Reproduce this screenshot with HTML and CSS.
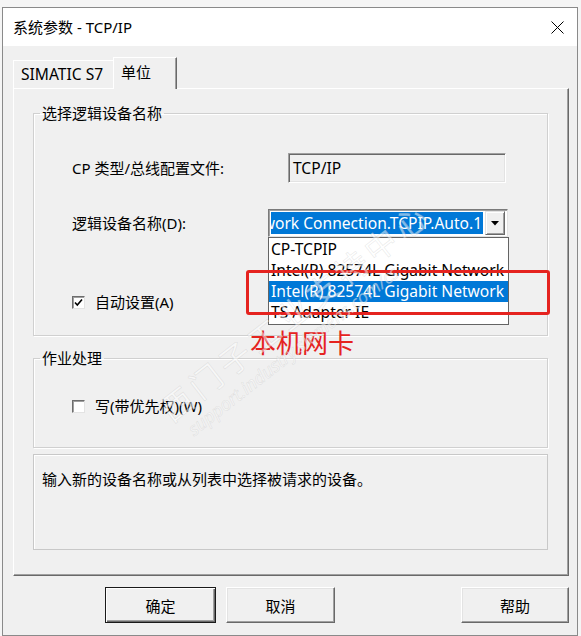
FILE: index.html
```html
<!DOCTYPE html>
<html lang="zh-CN">
<head>
<meta charset="utf-8">
<title>系统参数 - TCP/IP</title>
<link rel="stylesheet" href="styles.css">
</head>
<body>
<div class="window">
  <div class="titlebar">
    <span class="title">系统参数 - TCP/IP</span>
    <svg class="close" width="13" height="13" viewBox="0 0 13 13"><path d="M0.5 0.5 L12.5 12.5 M12.5 0.5 L0.5 12.5" stroke="#000" stroke-width="1" fill="none"/></svg>
  </div>
  <div class="client">
    <div class="tabs">
      <div class="tab latin">SIMATIC S7</div>
      <div class="tab active">单位</div>
    </div>
    <div class="panel">
      <fieldset class="group g1">
        <legend>选择逻辑设备名称</legend>
        <div class="gbody g1body">
          <div class="row r1">
            <span class="lbl lbl1">CP 类型/总线配置文件:</span>
            <div class="textbox latin">TCP/IP</div>
          </div>
          <div class="row r2">
            <span class="lbl lbl2">逻辑设备名称(D):</span>
            <div class="combo-wrap">
              <div class="combo">
                <div class="cval latin"><span class="sel">work Connection.TCPIP.Auto.1</span></div>
                <div class="cbtn"><svg width="8" height="5" viewBox="0 0 8 5"><path d="M0 0 H8 L4 4.5 Z" fill="#000"/></svg></div>
              </div>
              <ul class="dlist latin">
                <li>CP-TCPIP</li>
                <li>Intel(R) 82574L Gigabit Network</li>
                <li class="hl">Intel(R) 82574L Gigabit Network</li>
                <li>TS Adapter IE</li>
              </ul>
              <div class="redbox"></div>
              <div class="note">本机网卡</div>
            </div>
          </div>
          <div class="check chk1">
            <span class="box"><svg width="11" height="11" viewBox="0 0 11 11"><path d="M2 5.5 L4.3 8 L9 2.5" stroke="#000" stroke-width="1.6" fill="none"/></svg></span>
            <span>自动设置(A)</span>
          </div>
        </div>
      </fieldset>
      <fieldset class="group g2">
        <legend>作业处理</legend>
        <div class="gbody g2body">
          <div class="check">
            <span class="box"></span>
            <span>写(带优先权)(W)</span>
          </div>
        </div>
      </fieldset>
      <div class="info">输入新的设备名称或从列表中选择被请求的设备。</div>
    </div>
    <div class="buttons">
      <button class="btn default">确定</button>
      <button class="btn cancel">取消</button>
      <button class="btn help">帮助</button>
    </div>
  </div>
  <div class="watermark">
    <div class="wm1">西门子工业支持中心</div>
    <div class="wm2">support.industry.siemens.com/cs</div>
  </div>
</div>
</body>
</html>
```
FILE: styles.css
```css
* { box-sizing: border-box; }

body {
  margin: 0;
  background: #f5f5f5;
  font-family: "Noto Sans", "Noto Sans CJK SC", sans-serif;
  font-size: 15px;
  color: #000;
}

.latin { font-size: 15.6px; }

.window {
  position: relative;
  margin: 7px 0 0 2px;
  width: 576px;
  height: 629px;
  border: 1px solid #8a8a8a;
  background: #f0f0f0;
  overflow: hidden;
}

.titlebar {
  height: 38px;
  background: #fff;
  display: flex;
  align-items: center;
  justify-content: space-between;
  padding: 0 13px 0 10px;
}
.title { font-size: 15px; line-height: 20px; }
.close { display: block; }

.client { padding: 11px 8px 0 10px; }

.tabs {
  display: flex;
  align-items: flex-end;
  height: 31px;
  position: relative;
  z-index: 2;
}
.tab {
  width: 100px;
  height: 28px;
  padding-left: 7px;
  line-height: 26px;
  border-top: 1px solid #fff;
  border-left: 1px solid #fff;
  background: #f0f0f0;
  white-space: nowrap;
}
.tab.active {
  width: 64px;
  height: 32px;
  margin-bottom: -1px;
  padding-left: 7px;
  line-height: 28px;
  border-right: 1px solid #696969;
  box-shadow: inset -1px 0 #a0a0a0;
}

.panel {
  height: 488px;
  border: 1px solid;
  border-color: #fff #696969 #696969 #fff;
  box-shadow: inset -1px -1px #a0a0a0;
  padding: 14px 20px 0 19px;
}

.group {
  margin: 0;
  padding: 0;
  border: 1px solid #d0d0d0;
  box-shadow: inset 1px 1px #fff, 1px 1px #fff;
  min-width: 0;
}
.group legend {
  margin-left: 6px;
  padding: 0 2px;
  line-height: 20px;
  font-size: 15px;
}
.g2 { margin-top: 12px; }

.gbody { padding-left: 38px; }
.g1body { padding-top: 30px; padding-bottom: 23px; }
.g2body { padding-top: 28px; padding-bottom: 31px; }

.row { display: flex; align-items: center; }
.r1 { height: 30px; }
.r2 { height: 28px; margin-top: 26px; position: relative; z-index: 3; }
.lbl { white-space: nowrap; line-height: 20px; }
.lbl1 { width: 216px; }
.lbl2 { width: 196px; }

.textbox {
  width: 218px;
  height: 30px;
  border: 1px solid;
  border-color: #a0a0a0 #fff #fff #a0a0a0;
  box-shadow: inset 1px 1px #696969, inset -1px -1px #e3e3e3;
  padding-left: 4px;
  line-height: 28px;
  background: #f0f0f0;
}

.combo-wrap { position: relative; width: 240px; height: 28px; }
.combo {
  width: 240px;
  height: 28px;
  border: 1px solid;
  border-color: #7a7a7a #e3e3e3 #e3e3e3 #7a7a7a;
  box-shadow: inset 1px 1px #a0a0a0;
  background: #fff;
  padding: 2px;
  display: flex;
  align-items: center;
  gap: 2px;
}
.cval {
  width: 214px;
  height: 22px;
  overflow: hidden;
  display: flex;
  justify-content: flex-end;
}
.sel {
  background: #0078d7;
  color: #fff;
  white-space: nowrap;
  line-height: 22px;
  padding-right: 1px;
}
.cbtn {
  width: 20px;
  height: 24px;
  border: 1px solid;
  border-color: #e3e3e3 #696969 #696969 #e3e3e3;
  box-shadow: inset 1px 1px #fff, inset -1px -1px #a0a0a0;
  background: #f0f0f0;
  display: flex;
  align-items: center;
  justify-content: center;
}
.cbtn svg { display: block; }

.dlist {
  position: absolute;
  left: 0;
  top: 28px;
  width: 241px;
  margin: 0;
  padding: 1px 0 0;
  list-style: none;
  background: #fff;
  border: 1px solid #646464;
  height: 88px;
}
.dlist li {
  height: 21px;
  line-height: 21px;
  padding-left: 2px;
  white-space: nowrap;
  overflow: hidden;
}
.dlist li.hl { background: #0078d7; color: #fff; }

.redbox {
  position: absolute;
  left: -22px;
  top: 61px;
  width: 304px;
  height: 45px;
  border: 3px solid #e5231f;
  border-radius: 3px;
}
.note {
  position: absolute;
  left: -18px;
  top: 119px;
  font-size: 26px;
  line-height: 30px;
  color: #e5231f;
  white-space: nowrap;
}

.check {
  display: flex;
  align-items: center;
  gap: 10px;
  height: 20px;
  line-height: 20px;
}
.chk1 { margin-top: 55px; }
.box {
  width: 13px;
  height: 13px;
  border: 1px solid;
  border-color: #6d6d6d #e3e3e3 #e3e3e3 #6d6d6d;
  box-shadow: inset 1px 1px #a0a0a0;
  background: #fff;
  display: flex;
  align-items: center;
  justify-content: center;
}
.box svg { display: block; }

.info {
  margin-top: 6px;
  height: 96px;
  border: 1px solid #c8c8c8;
  box-shadow: inset 1px 1px #fff;
  padding: 14px 8px;
  line-height: 20px;
}

.buttons {
  display: flex;
  height: 36px;
  margin-top: 11px;
  padding-left: 92px;
}
.btn {
  height: 36px;
  font-family: "Noto Sans", "Noto Sans CJK SC", sans-serif;
  font-size: 15px;
  background: #f0f0f0;
  border: 1px solid;
  border-color: #fff #696969 #696969 #fff;
  box-shadow: inset -1px -1px #a0a0a0, inset 1px 1px #e3e3e3;
  padding: 0;
  color: #000;
}
.btn.default {
  width: 111px;
  border: 1px solid #1a1a1a;
  box-shadow: inset 1px 1px #fff, inset -1px -1px #696969, inset -2px -2px #a0a0a0;
}
.btn.cancel { width: 109px; margin-left: 10px; }
.btn.help { width: 108px; margin-left: auto; }

.watermark {
  position: absolute;
  left: 150px;
  top: 392px;
  transform: rotate(-38deg);
  transform-origin: 0 0;
  pointer-events: none;
  z-index: 5;
  white-space: nowrap;
  color: rgba(255, 255, 255, 0.5);
  -webkit-text-stroke: 0.7px rgba(150, 150, 150, 0.2);
}
.wm1 { font-size: 32px; line-height: 36px; letter-spacing: 5px; }
.wm2 { font-size: 18px; line-height: 22px; font-style: italic; margin-left: 10px; }
```
